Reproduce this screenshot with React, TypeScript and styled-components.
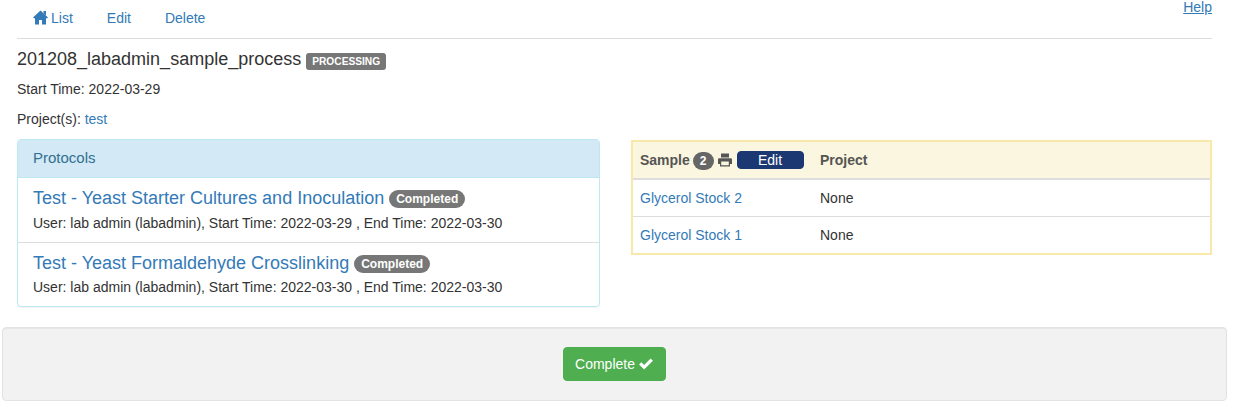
import React from "react";
import styled, { createGlobalStyle } from "styled-components";

const Global = createGlobalStyle`
  html, body { margin: 0; padding: 0; background: #fff; }
  body { font-family: "Liberation Sans", Arial, sans-serif; font-size: 14px; line-height: 20px; color: #333; }
  a { color: #337ab7; text-decoration: none; }
`;

const Page = styled.div`
  width: 1233px;
  height: 407px;
  overflow: hidden;
`;
const Content = styled.div`
  padding: 0 21px 0 17px;
`;
const TopBar = styled.div`
  display: flex;
  justify-content: space-between;
  height: 38px;
  border-bottom: 1px solid #ddd;
`;
const Nav = styled.nav`
  display: flex;
  padding: 8px 0 0 16px;
  gap: 34px;
  height: 20px;
`;
const NavLink = styled.a`
  display: inline-flex;
  align-items: center;
  gap: 3px;
  font-size: 14px;
  line-height: 20px;
`;
const HomeIcon = styled.svg`
  width: 15px;
  height: 15px;
  fill: currentColor;
  margin-top: -2px;
`;
const Help = styled.a`
  font-size: 14px;
  line-height: 15px;
  text-decoration: underline;
  height: 15px;
`;
const TitleRow = styled.div`
  display: flex;
  align-items: center;
  gap: 5px;
  margin-top: 10px;
  height: 21px;
`;
const Title = styled.h1`
  margin: 0;
  font-size: 18px;
  font-weight: 400;
  line-height: 21px;
  color: #333;
`;
const Label = styled.span`
  display: inline-block;
  background: #777;
  color: #fff;
  border-radius: 3px;
  font-size: 10.2px;
  font-weight: 700;
  line-height: 17px;
  padding: 0 6px;
  margin-top: 4px;
`;
const Meta = styled.p<{ $top: number }>`
  margin: ${(p) => p.$top}px 0 0;
  font-size: 14px;
  line-height: 20px;
`;
const Columns = styled.div`
  display: flex;
  align-items: flex-start;
  gap: 31px;
  margin-top: 10px;
`;
const Panel = styled.section`
  box-sizing: border-box;
  width: 583px;
  height: 168px;
  border: 1px solid #bce8f1;
  border-radius: 4px;
  box-shadow: 0 1px 1px rgba(0, 0, 0, 0.05);
  overflow: hidden;
`;
const PanelHead = styled.div`
  height: 38px;
  box-sizing: border-box;
  padding: 8px 15px;
  background: #d3e9f6;
  color: #31708f;
  font-size: 15px;
  line-height: 20px;
  border-bottom: 1px solid #bce8f1;
`;
const Item = styled.div<{ $last?: boolean }>`
  box-sizing: border-box;
  height: ${(p) => (p.$last ? 64 : 65)}px;
  padding: 9px 15px 0;
  border-bottom: ${(p) => (p.$last ? "none" : "1px solid #ddd")};
`;
const ItemTitle = styled.div`
  display: flex;
  align-items: center;
  gap: 5px;
  height: 22px;
`;
const ItemLink = styled.a`
  font-size: 18px;
  line-height: 22px;
`;
const Badge = styled.span`
  display: inline-block;
  background: #777;
  color: #fff;
  border-radius: 10px;
  font-size: 12px;
  font-weight: 700;
  line-height: 18px;
  padding: 0 7px;
  margin-top: 2px;
`;
const ItemMeta = styled.div<{ $top: number }>`
  margin-top: ${(p) => p.$top}px;
  font-size: 14px;
  line-height: 18px;
  color: #333;
`;
const Table = styled.table`
  box-sizing: border-box;
  width: 581px;
  height: 115px;
  margin-top: 1px;
  border: 2px solid #f8e9ab;
  border-collapse: separate;
  border-spacing: 0;
  table-layout: fixed;
`;
const HeadCell = styled.th`
  box-sizing: border-box;
  height: 38px;
  padding: 0 7px;
  background: #fbf6df;
  border-bottom: 2px solid #ddd;
  text-align: left;
  font-size: 14px;
  font-weight: 700;
  color: #555;
`;
const HeadInner = styled.div`
  display: flex;
  align-items: center;
`;
const Count = styled.span`
  display: inline-block;
  margin: 2px 0 0 3px;
  background: #666;
  color: #fff;
  border-radius: 10px;
  font-size: 12px;
  font-weight: 700;
  line-height: 18px;
  padding: 0 7px;
`;
const PrintIcon = styled.svg`
  width: 14px;
  height: 14px;
  margin-left: 4px;
  fill: #555;
`;
const EditButton = styled.button`
  box-sizing: border-box;
  width: 67px;
  height: 18px;
  margin: 0 0 1px 5px;
  padding: 0;
  border: 1px solid #1c3872;
  border-radius: 4px;
  background: #1c3872;
  color: #fff;
  font: 400 14px/16px "Liberation Sans", Arial, sans-serif;
`;
const Cell = styled.td<{ $h: number; $last?: boolean }>`
  box-sizing: border-box;
  height: ${(p) => p.$h}px;
  padding: 0 7px;
  font-size: 14px;
  border-bottom: ${(p) => (p.$last ? "none" : "1px solid #ddd")};
`;
const Well = styled.footer`
  box-sizing: border-box;
  display: flex;
  justify-content: center;
  align-items: center;
  width: 1225px;
  height: 74px;
  margin: 20px 0 0 2px;
  background: #f2f2f2;
  border: 1px solid #e3e3e3;
  border-radius: 4px;
  box-shadow: inset 0 1px 1px rgba(0, 0, 0, 0.05);
`;
const CompleteButton = styled.button`
  box-sizing: border-box;
  display: inline-flex;
  align-items: center;
  justify-content: center;
  gap: 4px;
  width: 103px;
  height: 34px;
  margin-left: -1px;
  padding: 0;
  border: 1px solid #4cae4c;
  border-radius: 4px;
  background: #4fae4f;
  color: #fff;
  font: 400 14px/20px "Liberation Sans", Arial, sans-serif;
`;
const CheckIcon = styled.svg`
  width: 14px;
  height: 12px;
  fill: #fff;
`;

const protocols = [
  { name: "Test - Yeast Starter Cultures and Inoculation", start: "2022-03-29", end: "2022-03-30", gap: 5 },
  { name: "Test - Yeast Formaldehyde Crosslinking", start: "2022-03-30", end: "2022-03-30", gap: 4 },
];
const samples = ["Glycerol Stock 2", "Glycerol Stock 1"];

export default function App() {
  return (
    <Page>
      <Global />
      <Content>
        <TopBar>
          <Nav>
            <NavLink href="#">
              <HomeIcon viewBox="0 0 15 15">
                <path d="M7.5 0.5 L15 7.6 L14.2 8.3 H13 V14.5 H9 V10 H6 V14.5 H2 V8.3 H0.8 L0 7.6 Z" />
                <path d="M10.5 1 H13 V5.5 L10.5 3.2 Z" />
              </HomeIcon>
              List
            </NavLink>
            <NavLink href="#">Edit</NavLink>
            <NavLink href="#">Delete</NavLink>
          </Nav>
          <Help href="#">Help</Help>
        </TopBar>
        <TitleRow>
          <Title>201208_labadmin_sample_process</Title>
          <Label>PROCESSING</Label>
        </TitleRow>
        <Meta $top={9}>Start Time: 2022-03-29</Meta>
        <Meta $top={10}>Project(s): <a href="#">test</a></Meta>
        <Columns>
          <Panel>
            <PanelHead>Protocols</PanelHead>
            {protocols.map((p, i) => (
              <Item key={p.name} $last={i === protocols.length - 1}>
                <ItemTitle>
                  <ItemLink href="#">{p.name}</ItemLink>
                  <Badge>Completed</Badge>
                </ItemTitle>
                <ItemMeta $top={p.gap}>
                  User: lab admin (labadmin), Start Time: {p.start} , End Time: {p.end}
                </ItemMeta>
              </Item>
            ))}
          </Panel>
          <Table>
            <colgroup>
              <col width={180} />
              <col />
            </colgroup>
            <thead>
              <tr>
                <HeadCell>
                  <HeadInner>
                    Sample
                    <Count>2</Count>
                    <PrintIcon viewBox="0 0 14 14">
                      <path d="M3 0.5 H11 V4.5 H3 Z" />
                      <path fillRule="evenodd" d="M1.2 5.2 H12.8 Q14 5.2 14 6.4 V11 H12 V13.5 H2 V11 H0 V6.4 Q0 5.2 1.2 5.2 Z M3.2 8.6 V12.2 H10.8 V8.6 Z" />
                    </PrintIcon>
                    <EditButton>Edit</EditButton>
                  </HeadInner>
                </HeadCell>
                <HeadCell>Project</HeadCell>
              </tr>
            </thead>
            <tbody>
              {samples.map((s, i) => {
                const last = i === samples.length - 1;
                return (
                  <tr key={s}>
                    <Cell $h={last ? 36 : 37} $last={last}><a href="#">{s}</a></Cell>
                    <Cell $h={last ? 36 : 37} $last={last}>None</Cell>
                  </tr>
                );
              })}
            </tbody>
          </Table>
        </Columns>
      </Content>
      <Well>
        <CompleteButton>
          Complete
          <CheckIcon viewBox="0 0 15 13">
            <path d="M0 7 L2.5 4.5 L5.5 7.5 L12.5 0.5 L15 3 L5.5 12.5 Z" />
          </CheckIcon>
        </CompleteButton>
      </Well>
    </Page>
  );
}
